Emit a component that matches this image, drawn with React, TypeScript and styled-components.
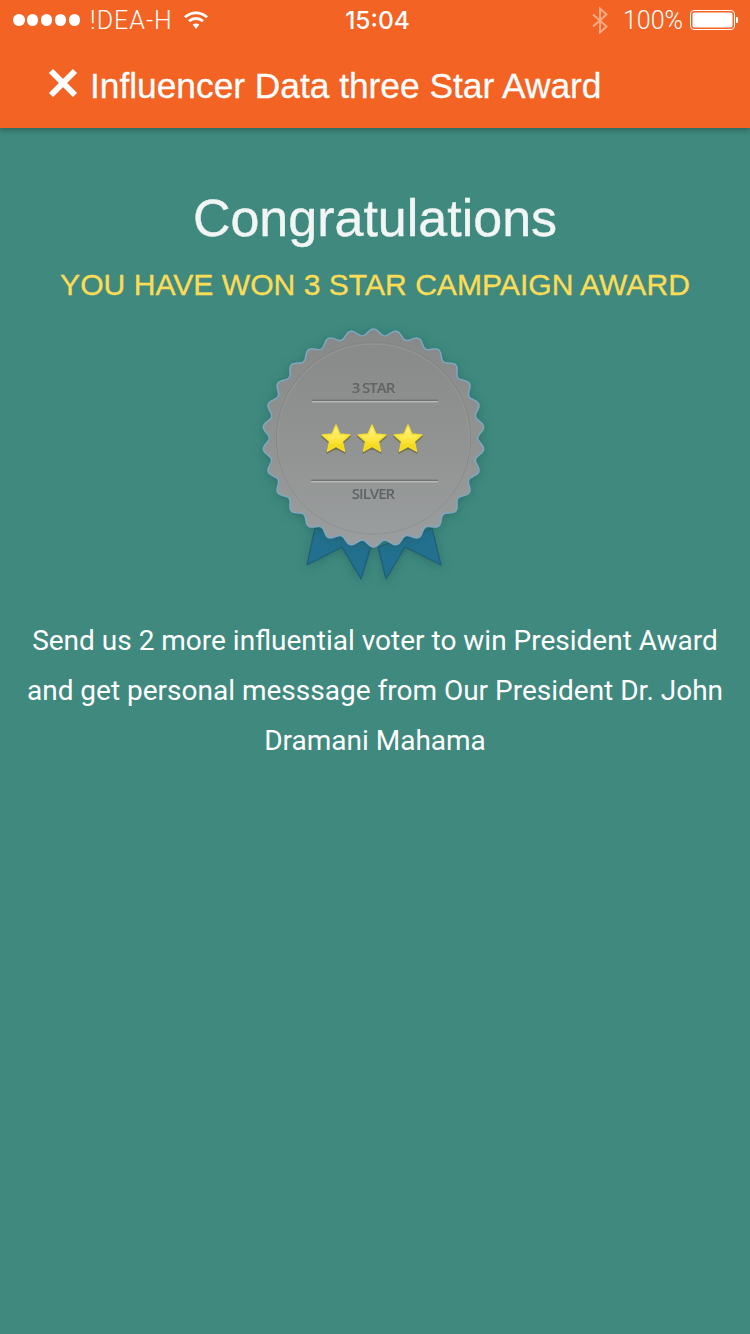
import styled, { createGlobalStyle } from "styled-components";

const GlobalStyle = createGlobalStyle`
  html, body {
    margin: 0;
    padding: 0;
    background: #3f897e;
  }
`;

const Page = styled.div`
  width: 750px;
  height: 1334px;
  display: flex;
  flex-direction: column;
  overflow: hidden;
  background: #3f897e;
  color: #fff;
`;

const Header = styled.header`
  height: 128px;
  flex: none;
  background: #f36323;
  box-shadow: 0 2px 6px rgba(0, 0, 0, 0.3);
  position: relative;
`;

const StatusBar = styled.div`
  height: 40px;
  padding: 0 12px 0 13px;
  display: grid;
  grid-template-columns: 1fr auto 1fr;
  align-items: center;
  font-family: "Roboto", "Liberation Sans", sans-serif;
  font-size: 25px;
  font-weight: 300;
`;

const StatusLeft = styled.div`
  display: flex;
  align-items: center;
`;

const StatusRight = styled.div`
  display: flex;
  align-items: center;
  justify-content: flex-end;
`;

const Dots = styled.div`
  display: flex;
  gap: 2.4px;
  margin-right: 10px;
`;

const Dot = styled.span`
  width: 11.5px;
  height: 11.5px;
  border-radius: 50%;
  background: #fff;
`;

const Carrier = styled.span`
  letter-spacing: 1px;
  margin-right: 11px;
`;

const Clock = styled.span`
  margin-left: 4px;
  font-family: "Inter", "Liberation Sans", sans-serif;
  font-size: 24.5px;
  font-weight: 500;
`;

const Percent = styled.span`
  margin: 0 7px 0 15px;
`;

const TitleRow = styled.div`
  height: 88px;
  padding: 4px 0 0 48px;
  box-sizing: border-box;
  display: flex;
  align-items: center;
  gap: 12px;
`;

const CloseGlyph = styled.svg`
  display: block;
  flex: none;
  margin-bottom: 6px;
`;

const TitleText = styled.h1`
  margin: 0;
  font-family: "Liberation Sans", Arial, sans-serif;
  font-size: 35.3px;
  font-weight: 400;
  -webkit-text-stroke: 0.3px #fff;
`;

const Content = styled.main`
  display: flex;
  flex-direction: column;
  align-items: center;
  padding-top: 60px;
`;

const Congrats = styled.h2`
  margin: 0;
  height: 60px;
  line-height: 60px;
  font-family: "Liberation Sans", Arial, sans-serif;
  font-size: 52px;
  font-weight: 400;
  color: #f1f5f3;
  -webkit-text-stroke: 0.4px #f1f5f3;
`;

const Won = styled.h3`
  margin: 7px 0 0;
  height: 60px;
  line-height: 60px;
  font-family: "Liberation Sans", Arial, sans-serif;
  font-size: 30.1px;
  font-weight: 400;
  color: #fbdc57;
  text-transform: uppercase;
  -webkit-text-stroke: 0.35px #fbdc57;
`;

const Badge = styled.svg`
  display: block;
  width: 280px;
  height: 270px;
  margin-top: 5px;
`;

const BadgeLabel = styled.text`
  font-family: "Open Sans", "Liberation Sans", sans-serif;
  font-size: 15px;
  font-weight: 600;
  letter-spacing: -1px;
  fill: #606464;
  text-anchor: middle;
`;

const Message = styled.p`
  margin: 26px 0 0;
  width: 730px;
  text-align: center;
  font-family: "Roboto", "Liberation Sans", sans-serif;
  font-size: 28px;
  line-height: 50px;
  color: #fff;
`;

const scallopPath = (cx: number, cy: number, r: number, amp: number, n: number) => {
  const pts: string[] = [];
  for (let i = 0; i < 720; i++) {
    const a = (i / 720) * Math.PI * 2;
    const rad = r + amp * Math.cos(n * a);
    pts.push(`${(cx + rad * Math.sin(a)).toFixed(2)} ${(cy - rad * Math.cos(a) * 0.985).toFixed(2)}`);
  }
  return `M${pts.join("L")}Z`;
};

const starPoints = (cx: number, cy: number, R: number, r: number) => {
  const pts: string[] = [];
  for (let i = 0; i < 10; i++) {
    const a = (i * Math.PI) / 5;
    const rad = i % 2 ? r : R;
    pts.push(`${(cx + rad * Math.sin(a)).toFixed(2)},${(cy - rad * Math.cos(a)).toFixed(2)}`);
  }
  return pts.join(" ");
};

const Medal = () => (
  <Badge viewBox="0 0 280 270">
    <defs>
      <linearGradient id="disc" x1="0" y1="0" x2="0" y2="1">
        <stop offset="0" stopColor="#878888" />
        <stop offset="1" stopColor="#9b9e9e" />
      </linearGradient>
      <linearGradient id="star" x1="0" y1="0" x2="0" y2="1">
        <stop offset="0" stopColor="#fff29a" />
        <stop offset="0.5" stopColor="#fde94a" />
        <stop offset="1" stopColor="#f2cf00" />
      </linearGradient>
      <filter id="halo" x="-20%" y="-20%" width="140%" height="140%">
        <feDropShadow dx="0" dy="2" stdDeviation="5" floodColor="#1d5a58" floodOpacity="0.5" />
      </filter>
      <filter id="soft">
        <feGaussianBlur stdDeviation="0.5" />
      </filter>
    </defs>
    <g fill="#246f8f" stroke="#1b5f78" strokeWidth="1.2" strokeLinejoin="round" filter="url(#halo)">
      <polygon points="80,208 72,245 107,227 126,259 137,223" />
      <polygon points="143,227 151,259 170,227 206,245 197,208" />
    </g>
    <path d={scallopPath(138.5, 118, 107.5, 3.2, 30)} fill="url(#disc)" stroke="#7fa9c2" strokeWidth="1.4" filter="url(#halo)" />
    <g filter="url(#soft)">
      <ellipse cx="138.5" cy="118" rx="97" ry="96" fill="none" stroke="#848585" strokeWidth="1" />
      <ellipse cx="138.5" cy="119" rx="96" ry="95" fill="none" stroke="#999b9b" strokeWidth="0.8" />
      <BadgeLabel x="138" y="73">3 STAR</BadgeLabel>
      <BadgeLabel x="138" y="179">SILVER</BadgeLabel>
      <rect x="77" y="79.6" width="126" height="1.4" fill="#6f7272" />
      <rect x="77" y="81" width="126" height="1.4" fill="#b8baba" />
      <rect x="76" y="159.6" width="127" height="1.4" fill="#6f7272" />
      <rect x="76" y="161" width="127" height="1.4" fill="#b8baba" />
    </g>
    {[101, 137, 173].map((x) => (
      <g key={x}>
        <polygon points={starPoints(x, 121, 14.5, 6.8)} fill="#6e6a3a" stroke="#6e6a3a" strokeWidth="2" strokeLinejoin="round" opacity="0.75" />
        <polygon points={starPoints(x, 119.5, 14.5, 6.8)} fill="url(#star)" stroke="#f5dd30" strokeWidth="1.4" strokeLinejoin="round" />
      </g>
    ))}
  </Badge>
);

const WifiIcon = () => (
  <svg width="24" height="20" viewBox="0 0 24 20" fill="none" stroke="#fff" strokeWidth="2.8">
    <path d="M1 7.2C7.2 1.4 16.8 1.4 23 7.2" />
    <path d="M5 11.2C9 7.6 15 7.6 19 11.2" />
    <path d="M8.6 14.6C10.6 13 13.4 13 15.4 14.6L12 19Z" fill="#fff" stroke="none" />
  </svg>
);

const BluetoothIcon = () => (
  <svg width="16" height="27" viewBox="0 0 16 27" fill="none" stroke="#fff" strokeOpacity="0.45" strokeWidth="2">
    <path d="M1 7.5L14.5 19.5L8 25.5V1.5L14.5 7.5L1 19.5" />
  </svg>
);

const BatteryIcon = () => (
  <svg width="48" height="20" viewBox="0 0 48 20">
    <rect x="0.5" y="0.5" width="44" height="19" rx="3.5" fill="none" stroke="#fff" />
    <rect x="2.5" y="2.5" width="40" height="15" rx="2" fill="#fff" />
    <path d="M46 7h1a1 1 0 0 1 1 1v4a1 1 0 0 1-1 1h-1Z" fill="#fff" />
  </svg>
);

const CloseIcon = () => (
  <CloseGlyph width="30" height="30" viewBox="0 0 30 30" stroke="#fff" strokeWidth="6">
    <path d="M3 3L27 27M27 3L3 27" />
  </CloseGlyph>
);

export default function App() {
  return (
    <Page>
      <GlobalStyle />
      <Header>
        <StatusBar>
          <StatusLeft>
            <Dots>
              {[0, 1, 2, 3, 4].map((i) => (
                <Dot key={i} />
              ))}
            </Dots>
            <Carrier>!DEA-H</Carrier>
            <WifiIcon />
          </StatusLeft>
          <Clock>15:04</Clock>
          <StatusRight>
            <BluetoothIcon />
            <Percent>100%</Percent>
            <BatteryIcon />
          </StatusRight>
        </StatusBar>
        <TitleRow>
          <CloseIcon />
          <TitleText>Influencer Data three Star Award</TitleText>
        </TitleRow>
      </Header>
      <Content>
        <Congrats>Congratulations</Congrats>
        <Won>You have won 3 star campaign award</Won>
        <Medal />
        <Message>
          Send us 2 more influential voter to win President Award
          <br />
          and get personal messsage from Our President Dr. John
          <br />
          Dramani Mahama
        </Message>
      </Content>
    </Page>
  );
}
